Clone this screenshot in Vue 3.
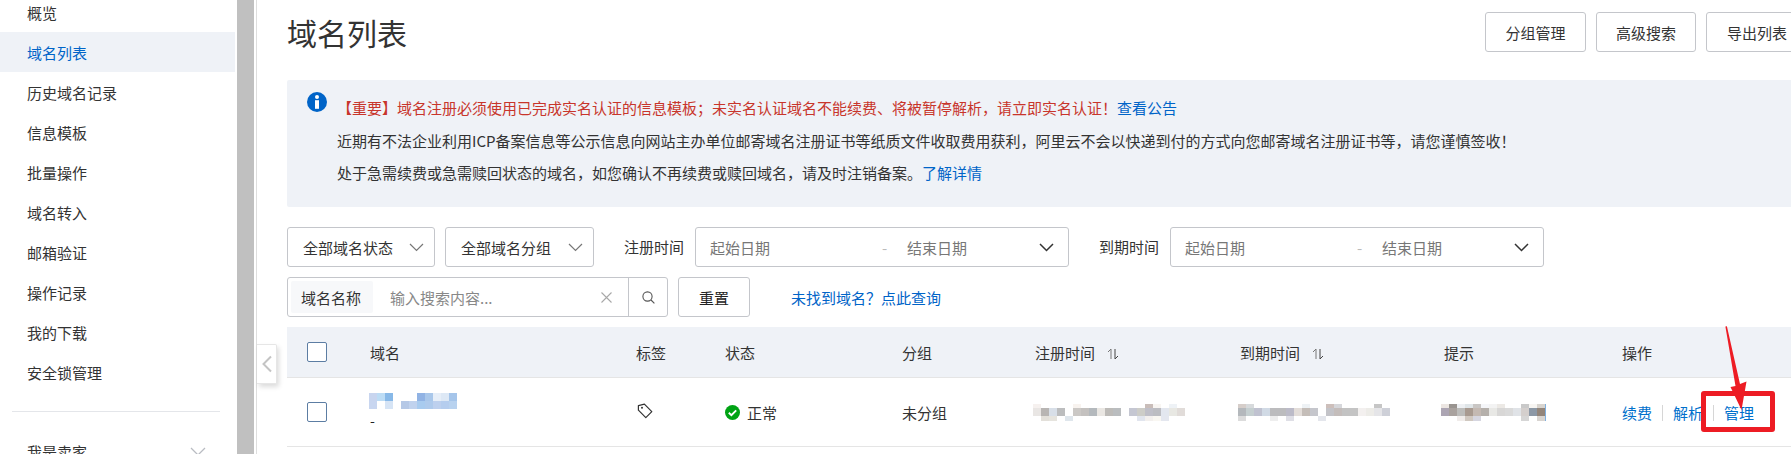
<script setup>
const menu = ['概览', '域名列表', '历史域名记录', '信息模板', '批量操作', '域名转入', '邮箱验证', '操作记录', '我的下载', '安全锁管理']
const n = null
const rows = {
  name: [
    ['#c8d5ef', '#bcdcf5', '#88b9e8', n, n, n, '#91b3e4', '#a9c7ea', '#e6eef8', '#dde8f5', '#a5c5ea'],
    ['#c8d6f0', n, '#d6e4f5', n, '#b5c8e6', '#c0d2ee', '#a8cbef', '#aecaec', '#bdd0ee', '#b5cdee', '#b8d2ef']
  ],
  reg: [
    ['#f6f1ef', n, n, n, n, '#f8f3ef', n, n, n, n, n, n, n, n, '#c9bdb9', '#f8f5f2', n, '#eef2f6', n],
    ['#e9e6e4', '#b8b5b3', '#d8dfe8', '#bcbdbe', n, '#cbc8c5', '#c4c1bf', '#b4b9bd', '#eae7e3', '#bdbbb8', '#babdbf', n, '#c5c7d2', '#cdcdc8', '#bfbfc8', '#bcbdc2', '#e3e7ef', '#e8e8e3', '#e1dcd9'],
    [n, '#e3e0da', '#e6e4de', n, '#dfe6ec', n, n, n, n, n, n, n, n, '#e1e5ee', '#f3f0ee', '#f9f7f2', '#e4e7ef', n, n]
  ],
  exp: [
    ['#d6ceca', '#d7dadc', n, n, n, n, n, n, '#eef2f5', n, n, '#cdbfbb', '#d6d7db', n, n, n, n, '#c6c6c6', n],
    ['#b4b8bc', '#c5cfd0', '#c0c2d0', '#d1dae5', '#bcbcbe', '#bcbcbe', '#bcbbc8', '#e3ddd9', '#c4bdb8', '#c5c6cc', n, '#c3c3c8', '#c4bdbb', '#c3c3c3', '#c4c4c4', '#f3f0ef', '#edece8', '#e5e5e8', '#ced0d8'],
    ['#dcdcdc', n, n, n, '#eeeeee', n, '#dfdfe6', n, n, n, '#e4e6ec', n, n, n, n, n, n, n, n]
  ],
  tip: [
    ['#ece6e2', '#999490', '#eef0f3', '#dfe5e8', '#c9c6c4', '#f5f6f9', '#f3f3f3', '#ece9e5', n, n, '#c9c9c9', '#f7f5f2', '#d8d4cf'],
    ['#aca5b3', '#a9a29e', '#bcbcba', '#a89a90', '#c4b9b2', '#b5b0ab', '#e8e8e5', '#d8d7d6', '#dadada', '#e0e3e7', '#d4cfcd', '#8c98a6', '#93857a'],
    [n, n, '#f0ecea', '#d0c8c0', '#d6d6e0', n, n, n, n, n, '#d6d6d6', n, '#d8d4d0']
  ]
}
const heights = { 0: 4, 1: 8, 2: 5 }
</script>

<template>
  <div class="page">
    <aside class="sidebar">
      <ul class="menu">
        <li v-for="m in menu" :key="m" class="menu-item" :class="{ active: m === '域名列表' }">{{ m }}</li>
      </ul>
      <div class="divider"></div>
      <div class="menu-item seller">
        <span>我是卖家</span>
        <svg class="seller-chevron" width="16" height="9" viewBox="0 0 16 9"><path d="M1 1l7 7 7-7" fill="none" stroke="#b9bcc2" stroke-width="1.3"/></svg>
      </div>
    </aside>
    <div class="scrollbar"></div>
    <div class="rule"></div>

    <div class="handle">
      <svg width="12" height="18" viewBox="0 0 12 18"><path d="M10 1.5L2.5 9l7.5 7.5" fill="none" stroke="#c4c4c4" stroke-width="2"/></svg>
    </div>

    <main class="main">
      <header class="header">
        <h1 class="title">域名列表</h1>
        <div class="header-actions">
          <button class="btn b1">分组管理</button>
          <button class="btn b2">高级搜索</button>
          <button class="btn b3">导出列表</button>
        </div>
      </header>

      <section class="alert">
        <svg class="alert-icon" width="20" height="20" viewBox="0 0 20 20">
          <circle cx="10" cy="10" r="10" fill="#0064c8"/>
          <circle cx="10" cy="5" r="2" fill="#fff"/>
          <rect x="8" y="8.2" width="4" height="8.6" fill="#fff"/>
        </svg>
        <div class="alert-text">
          <p class="red">【重要】域名注册必须使用已完成实名认证的信息模板；未实名认证域名不能续费、将被暂停解析，请立即实名认证！<a class="link">查看公告</a></p>
          <p>近期有不法企业利用ICP备案信息等公示信息向网站主办单位邮寄域名注册证书等纸质文件收取费用获利，阿里云不会以快递到付的方式向您邮寄域名注册证书等，请您谨慎签收！</p>
          <p>处于急需续费或急需赎回状态的域名，如您确认不再续费或赎回域名，请及时注销备案。<a class="link">了解详情</a></p>
        </div>
        <svg class="alert-close" width="12" height="12" viewBox="0 0 12 12"><path d="M1 1l10 10M11 1L1 11" stroke="#666" stroke-width="1" fill="none"/></svg>
      </section>

      <div class="filter-row first">
        <div class="select s1">
          <span>全部域名状态</span>
          <svg width="15" height="9" viewBox="0 0 15 9"><path d="M1 1l6.5 6.5L14 1" fill="none" stroke="#777" stroke-width="1.2"/></svg>
        </div>
        <div class="select s2">
          <span>全部域名分组</span>
          <svg width="15" height="9" viewBox="0 0 15 9"><path d="M1 1l6.5 6.5L14 1" fill="none" stroke="#777" stroke-width="1.2"/></svg>
        </div>
        <label class="filter-label">注册时间</label>
        <div class="range">
          <span class="range-start">起始日期</span>
          <span class="range-dash">-</span>
          <span class="range-end">结束日期</span>
          <svg width="15" height="9" viewBox="0 0 15 9"><path d="M1 1l6.5 6.5L14 1" fill="none" stroke="#333" stroke-width="1.5"/></svg>
        </div>
        <label class="filter-label">到期时间</label>
        <div class="range">
          <span class="range-start">起始日期</span>
          <span class="range-dash">-</span>
          <span class="range-end">结束日期</span>
          <svg width="15" height="9" viewBox="0 0 15 9"><path d="M1 1l6.5 6.5L14 1" fill="none" stroke="#333" stroke-width="1.5"/></svg>
        </div>
      </div>

      <div class="filter-row second">
        <div class="search">
          <span class="search-tag">域名名称</span>
          <span class="search-input">输入搜索内容...</span>
          <svg class="search-clear" width="11" height="11" viewBox="0 0 11 11"><path d="M.5.5l10 10M10.5.5l-10 10" stroke="#a8a8a8" stroke-width="1.1" fill="none"/></svg>
          <span class="search-btn">
            <svg width="13" height="13" viewBox="0 0 13 13"><circle cx="5.5" cy="5.5" r="4.6" fill="none" stroke="#555" stroke-width="1.1"/><path d="M9 9l3.4 3.4" stroke="#555" stroke-width="1.1"/></svg>
          </span>
        </div>
        <button class="btn reset">重置</button>
        <a class="link notfound">未找到域名？点此查询</a>
      </div>

      <div class="table">
        <div class="tr thead">
          <div class="td check"><span class="checkbox"></span></div>
          <div class="td">域名</div>
          <div class="td">标签</div>
          <div class="td">状态</div>
          <div class="td">分组</div>
          <div class="td">注册时间
            <svg class="sort" width="12" height="12" viewBox="0 0 12 12"><path d="M4 1v10M4 1L1 4" stroke="#777" fill="none"/><path d="M8 1v10l3-3" stroke="#444" fill="none"/></svg>
          </div>
          <div class="td">到期时间
            <svg class="sort" width="12" height="12" viewBox="0 0 12 12"><path d="M4 1v10M4 1L1 4" stroke="#777" fill="none"/><path d="M8 1v10l3-3" stroke="#444" fill="none"/></svg>
          </div>
          <div class="td">提示</div>
          <div class="td">操作</div>
        </div>
        <div class="tr tbody">
          <div class="td check"><span class="checkbox"></span></div>
          <div class="td name-cell">
            <div class="mosaic">
              <div v-for="(r, i) in rows.name" :key="i" class="m-row">
                <i v-for="(c, j) in r" :key="j" class="m-cell" :style="{ background: c || 'transparent' }"></i>
              </div>
            </div>
            <div class="dash">-</div>
          </div>
          <div class="td">
            <svg class="tag-icon" width="16" height="16" viewBox="0 0 16 16">
              <path d="M1.4 2.6L7.4 1.2 14.8 8.6 8.8 14.6 1.4 7.2Z" fill="none" stroke="#333" stroke-width="1.2" stroke-linejoin="round"/>
              <circle cx="5" cy="4.8" r="1" fill="#333"/>
            </svg>
          </div>
          <div class="td status">
            <svg width="15" height="15" viewBox="0 0 15 15">
              <circle cx="7.5" cy="7.5" r="7.5" fill="#00a314"/>
              <path d="M3.8 7.8l2.6 2.4 4.8-4.8" fill="none" stroke="#fff" stroke-width="1.9"/>
            </svg>
            <span>正常</span>
          </div>
          <div class="td">未分组</div>
          <div class="td">
            <div class="mosaic shifted">
              <div v-for="(r, i) in rows.reg" :key="i" class="m-row">
                <i v-for="(c, j) in r" :key="j" class="m-cell" :style="{ background: c || 'transparent', height: heights[i] + 'px' }"></i>
              </div>
            </div>
          </div>
          <div class="td">
            <div class="mosaic shifted">
              <div v-for="(r, i) in rows.exp" :key="i" class="m-row">
                <i v-for="(c, j) in r" :key="j" class="m-cell" :style="{ background: c || 'transparent', height: heights[i] + 'px' }"></i>
              </div>
            </div>
          </div>
          <div class="td">
            <div class="mosaic shifted tip-mosaic">
              <div v-for="(r, i) in rows.tip" :key="i" class="m-row">
                <i v-for="(c, j) in r" :key="j" class="m-cell" :style="{ background: c || 'transparent', height: heights[i] + 'px' }"></i>
              </div>
            </div>
          </div>
          <div class="td ops">
            <a class="link">续费</a><span class="op-sep"></span><a class="link">解析</a><span class="op-sep"></span><a class="link">管理</a>
          </div>
        </div>
      </div>
    </main>

    <div class="red-box"></div>
    <svg class="red-arrow" width="40" height="90" viewBox="0 0 40 90">
      <path d="M5.4 0.5L6.9 0.3 20 58 26.5 55.5 21.5 84 10.5 61 15.5 60Z" fill="#ed1c24"/>
    </svg>
  </div>
</template>

<style scoped>
.page {
  position: relative;
  display: flex;
  width: 1791px;
  height: 454px;
  overflow: hidden;
  background: #fff;
  color: #333;
  font-family: "Noto Sans CJK SC", "Liberation Sans", sans-serif;
  font-size: 15px;
}
.sidebar {
  flex: 0 0 235px;
  margin-right: 2px;
  margin-top: -8px;
}
.menu { list-style: none; margin: 0; padding: 0; }
.menu-item {
  display: flex;
  align-items: center;
  height: 40px;
  padding-left: 27px;
}
.menu-item.active { background: #eff2f7; color: #0064c8; }
.divider { height: 1px; margin: 19px 15px 19px 12px; background: #e4e6ea; }
.seller { justify-content: space-between; padding-right: 29px; }
.seller-chevron { display: block; }
.scrollbar { flex: 0 0 17px; background: #c0c0c0; }
.rule { flex: 0 0 1px; margin-left: 2px; background: #dedede; }
.handle {
  position: absolute;
  left: 257px;
  top: 344px;
  width: 20px;
  height: 40px;
  box-sizing: border-box;
  display: flex;
  align-items: center;
  justify-content: center;
  background: #fff;
  border: 1px solid #e6e6e6;
  border-left: 0;
  border-radius: 0 2px 2px 0;
  box-shadow: 2px 3px 5px rgba(0, 0, 0, 0.14);
}
.main { flex: 0 0 1504px; margin-left: 30px; }
.header { display: flex; align-items: center; height: 64px; margin-bottom: 16px; }
.title {
  flex: 0 0 1198px;
  margin: 0;
  font-size: 30px;
  font-weight: 400;
  line-height: 40px;
  color: #333;
}
.header-actions { display: flex; gap: 10px; }
.btn {
  height: 40px;
  box-sizing: border-box;
  background: #fff;
  border: 1px solid #c4c6cb;
  border-radius: 3px;
  color: #333;
  font: inherit;
  padding: 0;
  flex: none;
}
.b1 { width: 101px; }
.b2 { width: 100px; }
.b3 { width: 102px; }
.alert {
  display: flex;
  align-items: flex-start;
  height: 127px;
  box-sizing: border-box;
  padding: 12px 0 0 20px;
  background: #eff2f7;
  border-radius: 2px;
}
.alert-icon { flex: none; margin-right: 10px; }
.alert-text { flex: 1; }
.alert-text p { margin: 0; line-height: 32.5px; white-space: nowrap; }
.red { color: #c8352b; }
.link { color: #0064c8; }
.alert-close { flex: none; margin: 11px 1px 0 0; }
.filter-row { display: flex; align-items: center; height: 40px; }
.first { margin-top: 20px; }
.second { margin-top: 10px; }
.select, .range, .search {
  display: flex;
  align-items: center;
  height: 40px;
  box-sizing: border-box;
  border: 1px solid #c4c6cb;
  border-radius: 3px;
  background: #fff;
}
.select { justify-content: space-between; padding: 0 10px 0 15px; }
.s1 { width: 148px; margin-right: 10px; }
.s2 { width: 149px; }
.filter-label { margin: -2px 11px 0 30px; }
.range { width: 374px; padding-left: 14px; color: #777; }
.range-start { flex: 0 0 172px; }
.range-dash { flex: 0 0 25px; color: #bbb; }
.range-end { flex: 1; }
.range svg { margin-right: 14px; }
.search { width: 381px; }
.search-tag {
  display: flex;
  align-items: center;
  height: 32px;
  margin-left: 3px;
  padding: 0 12px 0 10px;
  background: #f7f8fa;
  border-radius: 2px;
}
.search-input { flex: 1; margin-left: 17px; color: #888; }
.search-clear { margin-right: 16px; }
.search-btn {
  display: flex;
  align-items: center;
  justify-content: center;
  width: 39px;
  height: 38px;
  box-sizing: border-box;
  border-left: 1px solid #c4c6cb;
}
.reset { width: 72px; margin-left: 10px; color: #222; }
.notfound { margin-left: 41px; }
.table { margin-top: 10px; }
.tr {
  display: grid;
  grid-template-columns: 83px 266px 89px 177px 133px 205px 204px 178px 1fr;
  align-items: center;
  border-bottom: 1px solid #e5e5e5;
}
.thead { height: 51px; box-sizing: border-box; background: #eff2f7; }
.tbody { height: 69px; box-sizing: border-box; }
.td { display: flex; align-items: center; white-space: nowrap; }
.check { padding-left: 20px; }
.checkbox {
  display: block;
  width: 20px;
  height: 20px;
  box-sizing: border-box;
  border: 1.5px solid #5c7da3;
  border-radius: 2px;
  background: #fff;
}
.sort { margin-left: 12px; margin-top: 3px; }
.name-cell { flex-direction: column; align-items: flex-start; margin-left: -1px; }
.mosaic { display: flex; flex-direction: column; }
.m-row { display: flex; }
.m-cell { display: block; flex: 0 0 8px; width: 8px; height: 8px; }
.shifted { margin: 1px 0 0 -2px; }
.tip-mosaic { margin-left: -3px; border-right: 1px solid #7fb0e0; }
.dash { margin-left: 1px; line-height: 22px; font-size: 14px; color: #222; }
.tag-icon { margin: -2px 0 0 1px; }
.status { gap: 7px; }
.ops { margin-top: 1px; }
.ops .link { color: #0070cc; }
.op-sep { width: 1px; height: 16px; margin: 0 10px; background: #d6d6d6; }
.red-box {
  position: absolute;
  left: 1701px;
  top: 391px;
  width: 74px;
  height: 41px;
  box-sizing: border-box;
  border: 5px solid #ed1c24;
  border-radius: 3px;
}
.red-arrow { position: absolute; left: 1720px; top: 326px; }
</style>

<style>
html, body { margin: 0; overflow: hidden; background: #fff; }
</style>
